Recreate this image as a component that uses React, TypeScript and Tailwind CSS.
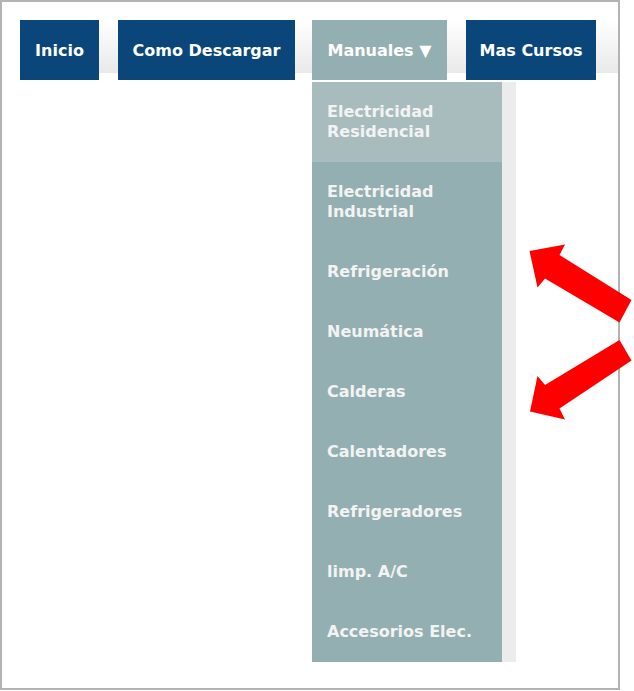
import React from "react";

const navItems = [
  { label: "Inicio", width: "w-[79px]", margin: "" },
  { label: "Como Descargar", width: "w-[177px]", margin: "ml-[19px]" },
];

const manuales = [
  "Electricidad Residencial",
  "Electricidad Industrial",
  "Refrigeración",
  "Neumática",
  "Calderas",
  "Calentadores",
  "Refrigeradores",
  "limp. A/C",
  "Accesorios Elec.",
];

function Arrows() {
  return (
    <svg
      className="pointer-events-none absolute left-0 top-0"
      width="634"
      height="691"
      viewBox="0 0 634 691"
    >
      <polygon
        fill="#ff0000"
        points="529.5,251 565,244.5 559.5,255 631.5,300 619.5,322.5 545,278.5 537.5,287.5"
      />
      <polygon
        fill="#ff0000"
        points="530,411.5 565,419.5 559.5,408.5 631.5,360.5 619.5,340 545,385 537.5,376"
      />
    </svg>
  );
}

export default function App() {
  return (
    <div className="relative h-[691px] w-[634px] bg-white font-['DejaVu_Sans',Verdana,sans-serif]">
      <div className="h-[690px] w-[620px] border-2 border-[#b3b3b3] pl-[18px] pt-[18px]">
        <nav className="flex h-[60px] bg-[linear-gradient(to_bottom,#ffffff_0px,#e9e9e9_53px,#ffffff_53px)]">
          {navItems.map((item) => (
            <a
              key={item.label}
              className={`${item.width} ${item.margin} flex h-[60px] items-center justify-center bg-[#0a4679] pt-[2px] text-[16px] font-bold text-white`}
            >
              {item.label}
            </a>
          ))}

          <div className="relative ml-[17px]">
            <a className="flex h-[60px] w-[135px] items-center justify-center bg-[#94afb1] pt-[2px] text-[16px] font-bold text-white">
              Manuales ▼
            </a>
            <ul className="absolute left-0 top-[62px] w-[190px] bg-[#94afb1] shadow-[14px_0_0_0_#ececec]">
              {manuales.map((name, index) => (
                <li
                  key={name}
                  className={`py-5 pl-[15px] pr-6 text-[16px] font-bold leading-5 text-[#f3f3f3] ${
                    index === 0 ? "bg-[#a8bcbe]" : ""
                  }`}
                >
                  {name}
                </li>
              ))}
            </ul>
          </div>

          <a className="ml-[19px] flex h-[60px] w-[130px] items-center justify-center bg-[#0a4679] pt-[2px] text-[16px] font-bold text-white">
            Mas Cursos
          </a>
        </nav>
      </div>
      <Arrows />
    </div>
  );
}
